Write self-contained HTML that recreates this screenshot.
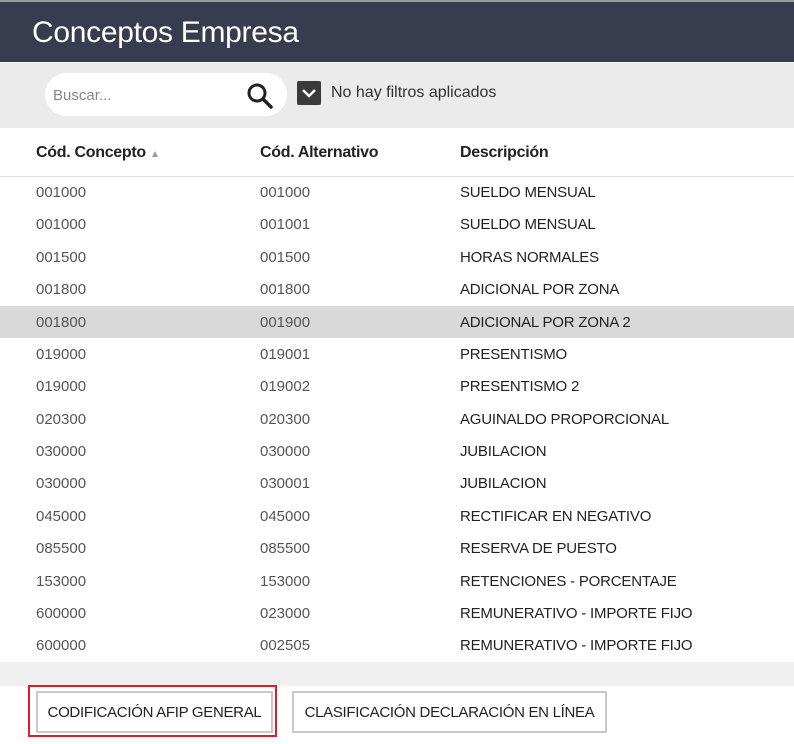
<!DOCTYPE html>
<html><head><meta charset="utf-8"><style>
*{margin:0;padding:0;box-sizing:border-box}
body{width:794px;height:744px;background:#fff;font-family:"Liberation Sans",sans-serif;position:relative;overflow:hidden}
.hdr{position:absolute;left:0;top:0;width:794px;height:62px;background:#373c4f;border-top:2px solid #9a9ca3}
.hdr h1{position:absolute;left:32px;top:14px;font-weight:normal;color:#fff;font-size:30px;letter-spacing:-0.3px}
.bar{position:absolute;left:0;top:63px;width:794px;height:65px;background:#ebebeb}
.search{position:absolute;left:45px;top:10px;width:242px;height:43px;background:#fff;border-radius:22px}
.search span{position:absolute;left:8px;top:14px;font-size:15px;color:#888}
.chk{position:absolute;left:297px;top:18px;width:24px;height:24px;background:#3b3b3b;border-radius:2px}
.flt{position:absolute;left:331px;top:21px;font-size:16px;color:#333}
.th{position:absolute;top:144px;font-size:16px;color:#222;font-weight:bold;letter-spacing:-0.3px}
.line{position:absolute;left:0;top:176px;width:794px;height:1px;background:#e2e2e2}
.row{position:absolute;left:0;width:794px;height:32px;font-size:15px}
.row div{position:absolute;top:8px}
.c1{left:36px;color:#555}.c2{left:260px;color:#555}.c3{left:460px;color:#222;letter-spacing:-0.2px}
.hl{background:#d9d9d9}
.band{position:absolute;left:0;top:662px;width:794px;height:24px;background:#f0f0f0}
.red{position:absolute;left:28px;top:685px;width:249px;height:52px;border:2px solid #e21b2a}
.btn{position:absolute;height:42px;border:2px solid #c8c8c8;background:#fff;font-size:15px;color:#222;text-align:center;line-height:39px;letter-spacing:-0.3px}
</style></head><body>
<div class="hdr"><h1>Conceptos Empresa</h1></div>
<div class="bar">
 <div class="search"><span>Buscar...</span>
  <svg style="position:absolute;left:201px;top:9px" width="28" height="28" viewBox="0 0 28 28"><circle cx="11" cy="11" r="8" fill="none" stroke="#222" stroke-width="3"/><line x1="17" y1="17" x2="25" y2="25" stroke="#222" stroke-width="3.5" stroke-linecap="round"/></svg>
 </div>
 <div class="chk"><svg width="24" height="24" viewBox="0 0 24 24"><polyline points="6,9 12,15 18,9" fill="none" stroke="#fff" stroke-width="2.5"/></svg></div>
 <div class="flt">No hay filtros aplicados</div>
</div>
<div class="th" style="left:36px">Cód. Concepto <span style="font-size:10px;color:#999;font-weight:normal">▲</span></div>
<div class="th" style="left:260px">Cód. Alternativo</div>
<div class="th" style="left:460px">Descripción</div>
<div class="line"></div>
<div class="row" style="top:176px"><div class="c1">001000</div><div class="c2">001000</div><div class="c3">SUELDO MENSUAL</div></div>
<div class="row" style="top:208px"><div class="c1">001000</div><div class="c2">001001</div><div class="c3">SUELDO MENSUAL</div></div>
<div class="row" style="top:241px"><div class="c1">001500</div><div class="c2">001500</div><div class="c3">HORAS NORMALES</div></div>
<div class="row" style="top:273px"><div class="c1">001800</div><div class="c2">001800</div><div class="c3">ADICIONAL POR ZONA</div></div>
<div class="row hl" style="top:306px"><div class="c1">001800</div><div class="c2">001900</div><div class="c3">ADICIONAL POR ZONA 2</div></div>
<div class="row" style="top:338px"><div class="c1">019000</div><div class="c2">019001</div><div class="c3">PRESENTISMO</div></div>
<div class="row" style="top:370px"><div class="c1">019000</div><div class="c2">019002</div><div class="c3">PRESENTISMO 2</div></div>
<div class="row" style="top:403px"><div class="c1">020300</div><div class="c2">020300</div><div class="c3">AGUINALDO PROPORCIONAL</div></div>
<div class="row" style="top:435px"><div class="c1">030000</div><div class="c2">030000</div><div class="c3">JUBILACION</div></div>
<div class="row" style="top:467px"><div class="c1">030000</div><div class="c2">030001</div><div class="c3">JUBILACION</div></div>
<div class="row" style="top:500px"><div class="c1">045000</div><div class="c2">045000</div><div class="c3">RECTIFICAR EN NEGATIVO</div></div>
<div class="row" style="top:532px"><div class="c1">085500</div><div class="c2">085500</div><div class="c3">RESERVA DE PUESTO</div></div>
<div class="row" style="top:565px"><div class="c1">153000</div><div class="c2">153000</div><div class="c3">RETENCIONES - PORCENTAJE</div></div>
<div class="row" style="top:597px"><div class="c1">600000</div><div class="c2">023000</div><div class="c3">REMUNERATIVO - IMPORTE FIJO</div></div>
<div class="row" style="top:629px"><div class="c1">600000</div><div class="c2">002505</div><div class="c3">REMUNERATIVO - IMPORTE FIJO</div></div>
<div class="band"></div>
<div class="red"></div>
<div class="btn" style="left:36px;top:691px;width:237px">CODIFICACIÓN AFIP GENERAL</div>
<div class="btn" style="left:292px;top:691px;width:315px">CLASIFICACIÓN DECLARACIÓN EN LÍNEA</div>
</body></html>
